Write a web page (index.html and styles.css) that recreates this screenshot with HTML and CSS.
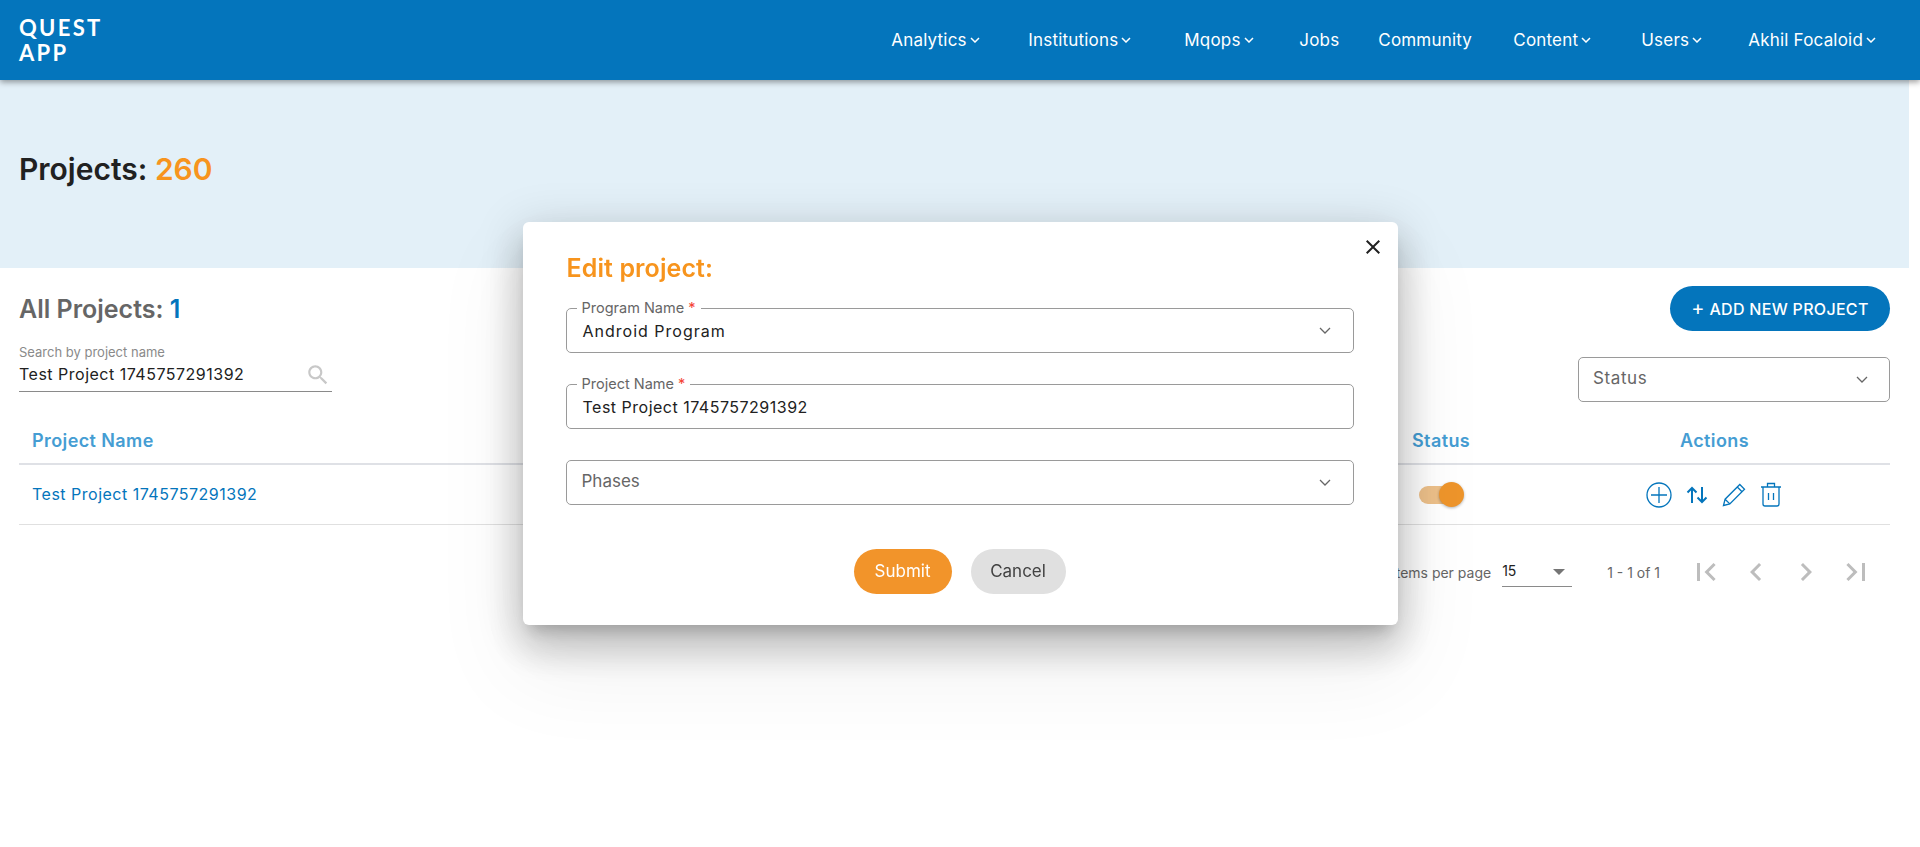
FILE: index.html
```html
<!DOCTYPE html>
<html lang="en">

<head>
    <meta charset="UTF-8">
    <title>Quest App - Projects</title>
    <link rel="stylesheet" href="styles.css">
</head>

<body>
    <header class="topbar">
        <div class="logo">QUEST<br>APP</div>
        <nav class="nav">
            <a class="nav-item nav-analytics">Analytics <svg class="caret" viewBox="0 0 10 6"><path d="M1 1l4 4 4-4"/></svg></a>
            <a class="nav-item nav-institutions">Institutions <svg class="caret" viewBox="0 0 10 6"><path d="M1 1l4 4 4-4"/></svg></a>
            <a class="nav-item nav-mqops">Mqops <svg class="caret" viewBox="0 0 10 6"><path d="M1 1l4 4 4-4"/></svg></a>
            <a class="nav-item nav-jobs">Jobs</a>
            <a class="nav-item nav-community">Community</a>
            <a class="nav-item nav-content">Content <svg class="caret" viewBox="0 0 10 6"><path d="M1 1l4 4 4-4"/></svg></a>
            <a class="nav-item nav-users">Users <svg class="caret" viewBox="0 0 10 6"><path d="M1 1l4 4 4-4"/></svg></a>
            <a class="nav-item">Akhil Focaloid <svg class="caret" viewBox="0 0 10 6"><path d="M1 1l4 4 4-4"/></svg></a>
        </nav>
    </header>

    <section class="band">
        <h1>Projects: <span class="orange">260</span></h1>
    </section>

    <main class="content">
        <div class="toolbar">
            <div class="toolbar-left">
                <h2>All Projects: <span class="blue">1</span></h2>
                <div class="search">
                    <label>Search by project name</label>
                    <div class="search-row">
                        <span class="spaced">Test Project 1745757291392</span>
                        <svg class="search-icon" viewBox="0 0 24 24"><path d="M15.5 14h-.79l-.28-.27C15.41 12.59 16 11.11 16 9.5 16 5.91 13.09 3 9.5 3S3 5.91 3 9.5 5.91 16 9.5 16c1.61 0 3.09-.59 4.23-1.57l.27.28v.79l5 4.99L20.49 19l-4.99-5zm-6 0C7.01 14 5 11.99 5 9.5S7.01 5 9.5 5 14 7.01 14 9.5 11.99 14 9.5 14z"/></svg>
                    </div>
                </div>
            </div>
            <div class="toolbar-right">
                <button class="add-btn"><span class="plus">+</span> ADD NEW PROJECT</button>
                <div class="field status-select">
                    <span class="placeholder status-text">Status</span>
                    <svg class="chevron" viewBox="0 0 12 7"><path d="M1 1l5 5 5-5"/></svg>
                </div>
            </div>
        </div>

        <div class="table">
            <div class="row head">
                <div class="cell-name">Project Name</div>
                <div>Status</div>
                <div class="cell-actions">Actions</div>
            </div>
            <div class="row body">
                <div class="cell-name spaced">Test Project 1745757291392</div>
                <div><span class="toggle"><span class="thumb"></span></span></div>
                <div class="cell-actions icons">
                    <svg class="act act-plus" viewBox="0 0 26 26"><circle cx="13" cy="13" r="12"/><path d="M13 5v16M5 13h16"/></svg>
                    <svg class="act act-sort" viewBox="0 0 22 20"><path d="M6 18V3M1.5 7.5L6 3l4.500 4.500M16 2v15M11.500 12.500L16 17l4.500-4.500"/></svg>
                    <svg class="act act-edit" viewBox="0 0 24 24"><path d="M1.500 22.500l1.600-6.300L17.800 1.500l4.700 4.700L7.800 20.900zM3.100 16.200l4.700 4.700M15.300 4l4.700 4.700"/></svg>
                    <svg class="act act-trash" viewBox="0 0 22 25"><path d="M1 5h20M3 5v17a2 2 0 0 0 2 2h12a2 2 0 0 0 2-2V5M7.500 5V1.500h7V5M8.500 11v7M13.500 11v7"/></svg>
                </div>
            </div>
        </div>

        <div class="pager">
            <span class="pager-label">Items per page</span>
            <div class="pager-select">15<span class="arrow"></span></div>
            <span class="pager-range">1 - 1 of 1</span>
            <div class="pager-btns">
                <svg viewBox="0 0 24 24"><path d="M18.410 16.590L13.820 12l4.590-4.590L17 6l-6 6 6 6zM6 6h2v12H6z"/></svg>
                <svg viewBox="0 0 24 24"><path d="M15.410 7.410L14 6l-6 6 6 6 1.410-1.410L10.830 12z"/></svg>
                <svg viewBox="0 0 24 24"><path d="M10 6L8.590 7.410 13.170 12l-4.580 4.590L10 18l6-6z"/></svg>
                <svg viewBox="0 0 24 24"><path d="M5.590 7.410L10.180 12l-4.590 4.590L7 18l6-6-6-6zM16 6h2v12h-2z"/></svg>
            </div>
        </div>
    </main>

    <div class="overlay">
        <div class="modal">
            <svg class="close" viewBox="0 0 24 24"><path d="M19 6.410L17.590 5 12 10.590 6.410 5 5 6.410 10.590 12 5 17.590 6.410 19 12 13.410 17.590 19 19 17.590 13.410 12z"/></svg>
            <h3>Edit project:</h3>
            <div class="field program">
                <span class="legend">Program Name <i>*</i></span>
                <span class="value wide">Android Program</span>
                <svg class="chevron" viewBox="0 0 12 7"><path d="M1 1l5 5 5-5"/></svg>
            </div>
            <div class="field project">
                <span class="legend">Project Name <i>*</i></span>
                <span class="value spaced">Test Project 1745757291392</span>
            </div>
            <div class="field phases">
                <span class="placeholder">Phases</span>
                <svg class="chevron" viewBox="0 0 12 7"><path d="M1 1l5 5 5-5"/></svg>
            </div>
            <div class="modal-btns">
                <button class="btn-submit">Submit</button>
                <button class="btn-cancel">Cancel</button>
            </div>
        </div>
    </div>
</body>

</html>
```
FILE: styles.css
```css
* {
    box-sizing: border-box;
}

body {
    margin: 0;
    font-family: Inter, "Noto Sans", sans-serif;
    font-size: 16px;
    color: #212121;
    background: white;
    overflow: hidden;
}

h1,
h2,
h3 {
    margin: 0;
    font-weight: 600;
}

.orange {
    color: #f7941d;
}

.blue {
    color: #0475bc;
}

.spaced {
    letter-spacing: 0.5px;
}

.topbar {
    position: relative;
    z-index: 2;
    height: 80px;
    display: flex;
    align-items: center;
    justify-content: space-between;
    padding: 0 44px 0 19px;
    background: #0475bc;
    box-shadow: 0 2px 6px rgba(0, 0, 0, 0.4);
    color: white;
}

.logo {
    font-family: Lato, sans-serif;
    font-size: 22px;
    line-height: 25px;
    letter-spacing: 2.3px;
    font-weight: 700;
}

.nav {
    display: flex;
}

.nav-item {
    font-size: 17px;
    font-weight: 400;
    letter-spacing: 0.2px;
    white-space: nowrap;
}

.nav-analytics {
    width: 137px;
}

.nav-institutions {
    width: 156px;
}

.nav-mqops {
    width: 115px;
}

.nav-jobs {
    width: 79px;
}

.nav-community {
    width: 135px;
}

.nav-content {
    width: 128px;
}

.nav-users {
    width: 107px;
}

.caret {
    width: 10px;
    height: 6px;
    margin-left: -2px;
    vertical-align: 3px;
    fill: none;
    stroke: white;
    stroke-width: 1.500;
}

.band {
    height: 188px;
    margin-right: 11px;
    padding: 0 19px;
    display: flex;
    align-items: center;
    background: #e3f0f8;
}

h1 {
    font-size: 30px;
    margin-top: -10px;
}

.content {
    margin-right: 30px;
    padding: 18px 0 0 19px;
}

.toolbar {
    display: flex;
    justify-content: space-between;
}

h2 {
    font-size: 25px;
    line-height: 36px;
    margin-top: 5px;
    color: #666;
}

.search {
    width: 313px;
    margin-top: 17px;
    border-bottom: 1px solid #8a8a8a;
}

.search label {
    display: block;
    font-size: 13px;
    line-height: 16px;
    color: #8a8a8a;
}

.search-row {
    display: flex;
    justify-content: space-between;
    align-items: flex-start;
    height: 31px;
    padding-top: 4px;
}

.search-icon {
    width: 26px;
    height: 26px;
    margin: -2px 1px 0 0;
    fill: #c8c8c8;
}

.toolbar-right {
    width: 312px;
    display: flex;
    flex-direction: column;
    align-items: flex-end;
}

.add-btn {
    width: 220px;
    height: 45px;
    border: none;
    border-radius: 23px;
    background: #0475bc;
    color: white;
    font: 500 16px Inter, sans-serif;
    letter-spacing: 0.3px;
}

.plus {
    font-size: 20px;
    line-height: 1;
    font-weight: 400;
}

.field {
    position: relative;
    height: 45px;
    display: flex;
    align-items: center;
    justify-content: space-between;
    padding: 0 15px;
    border: 1px solid #9a9a9a;
    border-radius: 5px;
    background: white;
}

.status-select {
    width: 312px;
    margin-top: 26px;
}

.status-select .chevron {
    margin-right: 6px;
}

.placeholder {
    margin-top: -4px;
    font-size: 17px;
    color: #666;
}

.status-text {
    letter-spacing: 0.6px;
    margin-left: -1px;
}

.chevron {
    width: 12px;
    height: 7px;
    margin-right: 7px;
    fill: none;
    stroke: #666;
    stroke-width: 1.300;
}

.table {
    margin-top: 15px;
}

.row {
    display: grid;
    grid-template-columns: 1fr 127px 351px;
    align-items: center;
}

.row.head {
    height: 48px;
    border-bottom: 2px solid #dfe1e6;
    font-size: 18px;
    letter-spacing: 0.4px;
    color: #459dd3;
    font-weight: 600;
}

.row.body {
    height: 60px;
    border-bottom: 1px solid #e0e0e0;
    color: #0475bc;
}

.row.body .cell-name {
    margin-top: -2px;
}

.cell-name {
    padding-left: 13px;
}

.cell-actions {
    text-align: center;
}

.icons {
    display: flex;
    justify-content: center;
    align-items: center;
    gap: 14px;
    margin-left: -2px;
}

.act {
    fill: none;
    stroke: #0475bc;
    stroke-width: 1.300;
}

.act-plus {
    width: 26px;
    height: 26px;
}

.act-sort {
    width: 22px;
    height: 20px;
    stroke-width: 2;
}

.act-edit {
    width: 24px;
    height: 24px;
}

.act-trash {
    width: 22px;
    height: 25px;
}

.toggle {
    display: block;
    position: relative;
    width: 38px;
    height: 18px;
    margin-left: 7px;
    border-radius: 9px;
    background: #edc08a;
}

.thumb {
    position: absolute;
    right: -7px;
    top: -4px;
    width: 25px;
    height: 25px;
    border-radius: 50%;
    background: #ee952b;
    box-shadow: 0 1px 3px rgba(0, 0, 0, 0.3);
}

.pager {
    display: flex;
    align-items: center;
    justify-content: flex-end;
    height: 94px;
    padding-right: 9px;
    font-size: 14px;
    color: #666;
}

.pager-select {
    position: relative;
    width: 70px;
    height: 30px;
    margin: 0 35px 0 11px;
    line-height: 28px;
    color: #212121;
    border-bottom: 1px solid #8a8a8a;
}

.arrow {
    position: absolute;
    right: 7px;
    top: 12px;
    border: 6px solid transparent;
    border-top: 6px solid #757575;
    border-bottom: none;
}

.pager-btns {
    display: flex;
    margin-left: 21px;
}

.pager-btns svg {
    width: 36px;
    height: 36px;
    margin: 0 7px;
    fill: #bdbdbd;
}

.overlay {
    position: fixed;
    inset: 0;
    z-index: 5;
    display: flex;
    align-items: center;
    justify-content: center;
}

.modal {
    position: relative;
    width: 875px;
    height: 403px;
    padding: 31px 44px 0 43px;
    border-radius: 6px;
    background: white;
    box-shadow: 0 11px 15px -7px rgba(0, 0, 0, 0.2), 0 24px 38px 3px rgba(0, 0, 0, 0.14), 0 9px 46px 8px rgba(0, 0, 0, 0.12), 0 40px 90px 10px rgba(0, 0, 0, 0.06);
}

.close {
    position: absolute;
    top: 13px;
    right: 13px;
    width: 24px;
    height: 24px;
    fill: #212121;
}

h3 {
    font-size: 25px;
    line-height: 30px;
    letter-spacing: 0.1px;
    color: #f7941d;
    padding-left: 1px;
}

.modal .field {
    margin-top: 31px;
}

.modal .field.program {
    margin-top: 25px;
}

.legend {
    position: absolute;
    left: 10px;
    top: -10px;
    padding: 0 5px;
    font-size: 14.5px;
    line-height: 18px;
    color: #666;
    background: white;
}

.legend i {
    font-style: normal;
    color: #f44336;
}

.value {
    padding: 1px 0 0 1px;
}

.value.wide {
    letter-spacing: 1px;
}

.modal-btns {
    display: flex;
    justify-content: center;
    gap: 19px;
    margin-top: 44px;
}

.modal-btns button {
    height: 45px;
    padding-bottom: 2px;
    border: none;
    border-radius: 23px;
    font: 400 17px Inter, sans-serif;
}

.btn-submit {
    width: 98px;
    background: #f2942a;
    color: white;
}

.btn-cancel {
    width: 95px;
    background: #e0e0e0;
    color: #424242;
}
```
